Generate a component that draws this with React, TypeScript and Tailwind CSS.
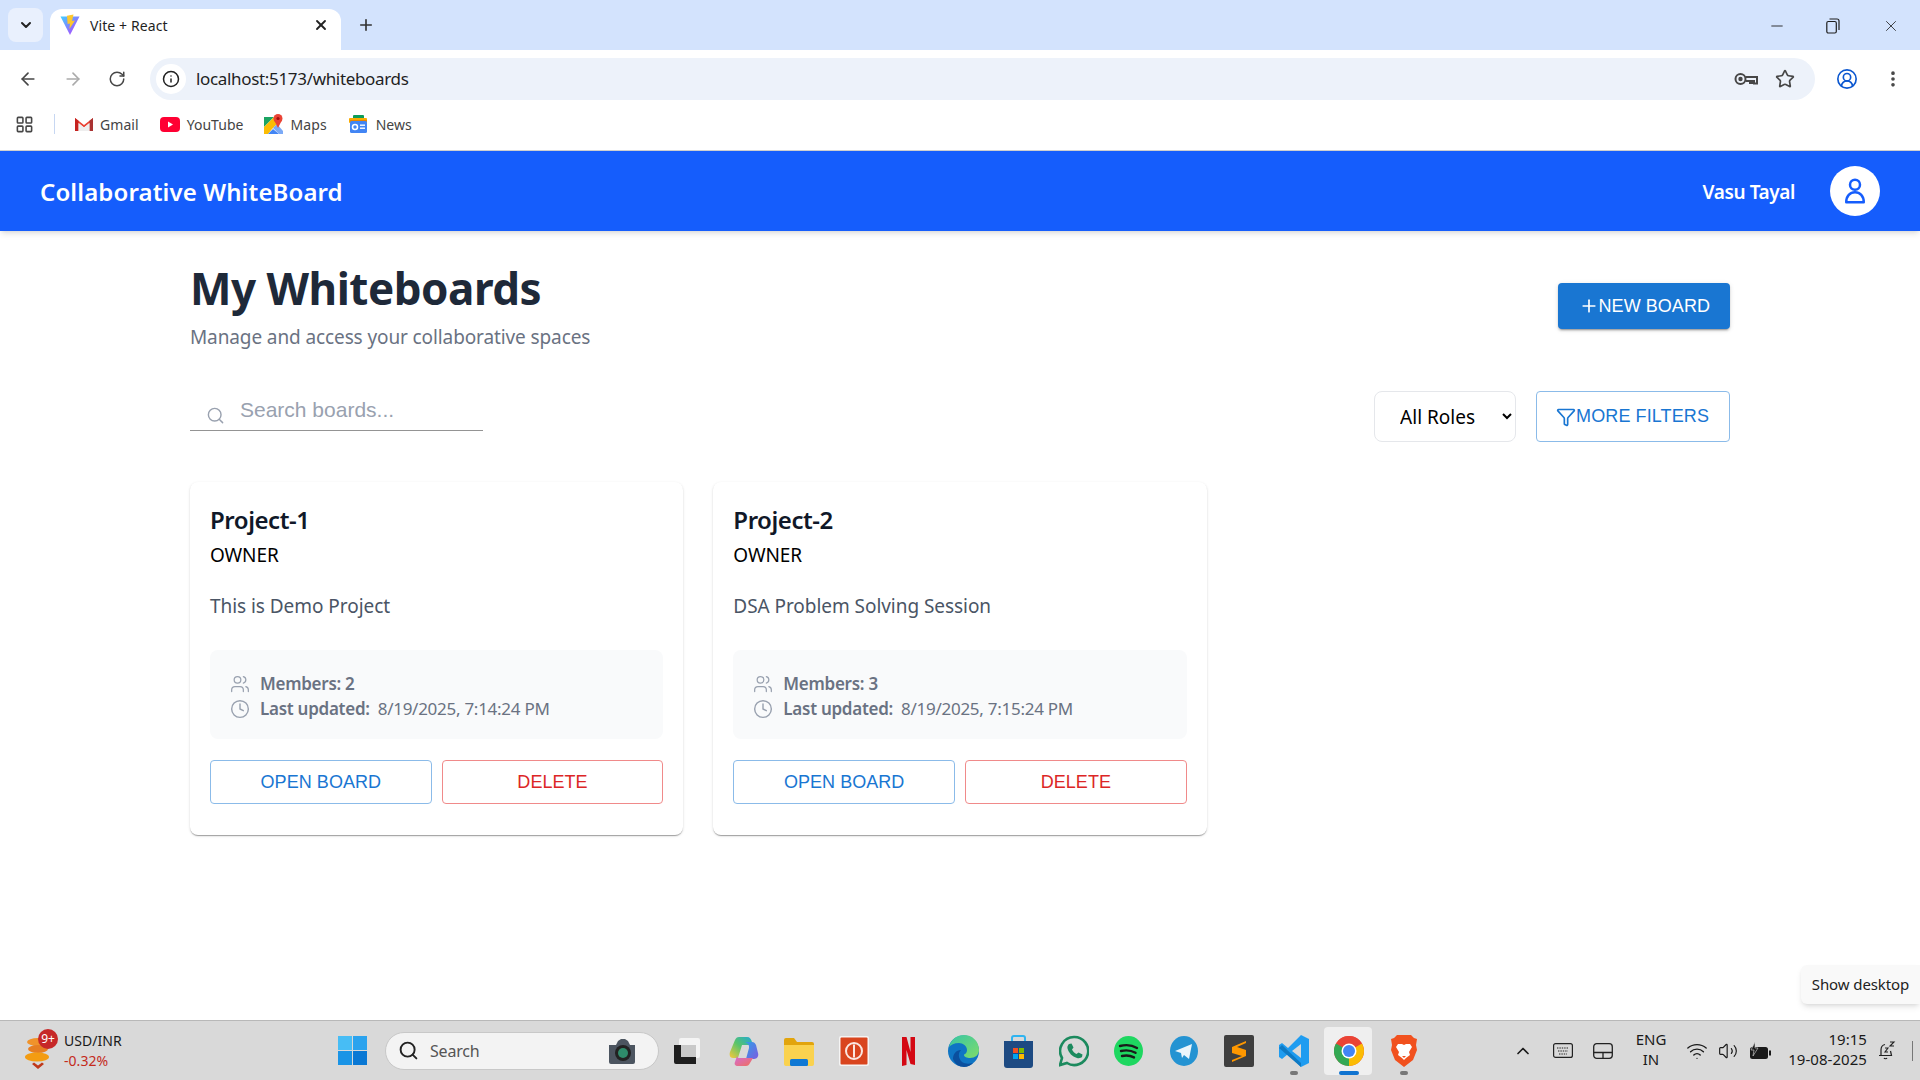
import React from "react";
import { ArrowLeft, ArrowRight, RotateCw, Info, Star, EllipsisVertical, Minus, X, Plus, ChevronDown, ChevronUp, Users, Clock, Search, Funnel, LayoutGrid, Wifi, Volume2, CircleUserRound } from "lucide-react";

const sans = "font-['Noto_Sans','Open_Sans',sans-serif]";

function Vite() {
  return (
    <svg width="20" height="22" viewBox="0 0 20 22">
      <defs>
        <linearGradient id="v1" x1="0" y1="0" x2="1" y2="1"><stop offset="0" stopColor="#41d1ff" /><stop offset="1" stopColor="#bd34fe" /></linearGradient>
      </defs>
      <path d="M0.5 2.5 L19.5 2.5 L10 21 Z" fill="url(#v1)" />
      <path d="M13.5 0.5 L7 1.8 L7.6 10 L10 9.4 L9.4 15 L15 6.5 L12 7 Z" fill="#fdc72e" />
    </svg>
  );
}
function Gmail() {
  return (
    <svg width="20" height="16" viewBox="0 0 20 16">
      <path d="M1 15V2l9 7 9-7v13h-3.5V7L10 11.5 4.5 7v8z" fill="#ea4335" />
      <path d="M1 15V2l3.5 2.8V15z" fill="#c5221f" />
      <path d="M15.5 15V4.8L19 2v13z" fill="#a33" />
      <path d="M4.5 7 10 11.5 15.5 7v8h-11z" fill="#eee" />
    </svg>
  );
}
function YouTube() {
  return (
    <svg width="20" height="15" viewBox="0 0 20 15">
      <rect width="20" height="15" rx="4" fill="#ff0033" />
      <path d="M8 4.5v6l5-3z" fill="#fff" />
    </svg>
  );
}
function Maps() {
  return (
    <svg width="19" height="20" viewBox="0 0 19 20">
      <path d="M0 3h10L0 13z" fill="#1ba462" />
      <path d="M0 13 10 3l4 6-6 6-4 5H0z" fill="#fbbc04" />
      <path d="M4 20l5-5 6 5z" fill="#4285f4" />
      <path d="M9 14l4-4 6 7v3h-4z" fill="#7baaf7" />
      <circle cx="14" cy="4.5" r="4.5" fill="#ea4335" />
      <path d="M10 6l4 8 4-8z" fill="#ea4335" />
      <circle cx="14" cy="4.5" r="1.6" fill="#a50e0e" />
    </svg>
  );
}
function News() {
  return (
    <svg width="19" height="18" viewBox="0 0 19 18">
      <rect x="4" y="0" width="11" height="6" rx="1" fill="#0c9d58" />
      <rect x="0" y="3" width="18" height="5" rx="1" fill="#f9ab00" />
      <path d="M1 5h17l-1 5H2z" fill="#e37400" opacity=".7" />
      <rect x="1" y="6" width="17" height="12" rx="1.5" fill="#4285f4" />
      <rect x="3.5" y="9.5" width="5" height="5" rx="2.5" fill="none" stroke="#fff" strokeWidth="1.5" />
      <rect x="11" y="9.5" width="5" height="1.4" fill="#fff" />
      <rect x="11" y="12.5" width="5" height="1.4" fill="#fff" />
    </svg>
  );
}
function Key() {
  return (
    <svg width="24" height="14" viewBox="0 0 24 14" fill="none" stroke="#474747" strokeWidth="2">
      <circle cx="6.5" cy="7" r="5" />
      <circle cx="6.5" cy="7" r="1.2" fill="#474747" />
      <path d="M11.5 5H23v6.5h-3V9h-2v2h-2V9h-4.5" />
    </svg>
  );
}
function Restore() {
  return (
    <svg width="14" height="16" viewBox="0 0 14 16" fill="none" stroke="#1f1f1f" strokeWidth="1.2">
      <rect x="0.8" y="3.5" width="9.5" height="11.5" rx="1.5" />
      <path d="M3.5 1h7.5a2 2 0 0 1 2 2v9" />
    </svg>
  );
}

function Card({ title, desc, members, updated }: { title: string; desc: string; members: number; updated: string }) {
  return (
    <div className="h-[353px] rounded-lg bg-white p-5 shadow-[0_2px_1px_-1px_rgba(0,0,0,0.2),0_1px_1px_0_rgba(0,0,0,0.14),0_1px_3px_0_rgba(0,0,0,0.12)]">
      <h2 className="mt-[3px] text-[24px] leading-[30px] font-semibold tracking-[-0.45px] text-gray-900">{title}</h2>
      <p className="mt-[6px] text-[19px] leading-[28px] tracking-[-0.1px] text-black">OWNER</p>
      <p className="mt-[23px] text-[19px] leading-[28px] tracking-[-0.05px] text-gray-600">{desc}</p>
      <div className="mt-[30px] h-[89px] rounded-lg bg-gray-50 px-[20px] py-[21px] text-[17px] tracking-[-0.27px] text-gray-500">
        <div className="flex h-[25px] items-center gap-[10px]">
          <Users size={20} strokeWidth={1.5} className="text-gray-400" />
          <span className="font-semibold">Members: {members}</span>
        </div>
        <div className="flex h-[25px] items-center gap-[10px]">
          <Clock size={20} strokeWidth={1.7} className="text-gray-400" />
          <span><span className="font-semibold">Last updated:</span><span className="ml-[8px]">{updated}</span></span>
        </div>
      </div>
      <div className="mt-[21px] flex gap-[10px] font-['Liberation_Sans',sans-serif] text-[18px] tracking-[0.05px]">
        <button className="h-[44px] flex-1 rounded border border-[#8bbbe9] text-[#1976d2]">OPEN BOARD</button>
        <button className="h-[44px] flex-1 rounded border border-[#f08a8a] text-[#dc2626]">DELETE</button>
      </div>
    </div>
  );
}

function Slot({ children, active, dot }: { children: React.ReactNode; active?: boolean; dot?: boolean }) {
  return (
    <div className="relative flex h-[48px] w-[55px] shrink-0 items-center justify-center">
      {active && <div className="absolute inset-y-0 left-[3px] right-[4px] rounded bg-[#efefef]" />}
      <div className="relative flex items-center justify-center">{children}</div>
      {active && <div className="absolute bottom-0 h-[4px] w-[20px] rounded-full bg-[#0f73d0]" />}
      {dot && <div className="absolute bottom-0 h-[4px] w-[8px] rounded-full bg-[#777]" />}
    </div>
  );
}

function Taskbar() {
  return (
    <div className={`flex h-[60px] shrink-0 items-center justify-between border-t border-[#b8b8b8] bg-[#d9d9d9] ${sans}`}>
      <div className="flex items-center">
        <div className="flex w-[325px] items-center pl-[25px]">
          <div className="relative h-[40px] w-[36px]">
            <svg width="26" height="40" viewBox="0 0 26 40" className="absolute left-0 top-0">
              <ellipse cx="13" cy="11" rx="11" ry="4" fill="#f0932b" />
              <ellipse cx="13" cy="18" rx="10" ry="4" fill="#e67e22" />
              <ellipse cx="12" cy="26" rx="12" ry="4.5" fill="#f39c12" />
              <path d="M7 33l6 5 6-5-2-1.5-4 3-4-3z" fill="#c0391b" />
            </svg>
            <div className="absolute left-[13px] top-[-2px] flex h-[20px] w-[20px] items-center justify-center rounded-full bg-[#c62828] text-[12px] leading-none text-white">9+</div>
          </div>
          <div className="ml-[3px] text-[14px] leading-[20px] tracking-[0.05px]">
            <div className="text-[#1a1a1a]">USD/INR</div>
            <div className="text-[#c42b1c]">-0.32%</div>
          </div>
        </div>
        <Slot>
          <svg width="29" height="29" viewBox="0 0 29 29">
            <rect x="0" y="0" width="14" height="14" fill="#47bdf5" />
            <rect x="15" y="0" width="14" height="14" fill="#2ba3ee" />
            <rect x="0" y="15" width="14" height="14" fill="#1a94e6" />
            <rect x="15" y="15" width="14" height="14" fill="#0a78d4" />
          </svg>
        </Slot>
        <div className="ml-[5px] flex h-[38px] w-[274px] items-center rounded-full border border-[#c8c8c8] bg-[#f3f3f3] pl-[12px] pr-[21px]">
          <Search size={21} strokeWidth={2.2} className="text-[#222]" />
          <span className="ml-[11px] flex-1 text-[16px] tracking-[-0.2px] text-[#555]">Search</span>
          <svg width="30" height="28" viewBox="0 0 30 28">
            <path d="M2 8h7l2-4 3-2h4l3 2 2 4h5v17a2 2 0 0 1-2 2H4a2 2 0 0 1-2-2z" fill="#4c5560" />
            <circle cx="16" cy="16" r="8" fill="#222" />
            <circle cx="16" cy="16" r="5" fill="#2e8b6a" />
          </svg>
        </div>
        <Slot>
          <svg width="26" height="26" viewBox="0 0 26 26">
            <rect x="5" y="0" width="21" height="20" rx="2" fill="#f4f4f4" />
            <path d="M0 7h7v12h15v7H2a2 2 0 0 1-2-2z" fill="#1f1f1f" />
            <rect x="7" y="7" width="15" height="12" fill="#c9c9c9" />
          </svg>
        </Slot>
        <div className="w-[2px]" />
        <Slot>
          <svg width="30" height="30" viewBox="0 0 30 30">
            <defs>
              <linearGradient id="c1" x1="0" y1="0" x2="1" y2="1"><stop offset="0" stopColor="#2f9fe8" /><stop offset="1" stopColor="#7c5ce0" /></linearGradient>
              <linearGradient id="c2" x1="0" y1="1" x2="1" y2="0"><stop offset="0" stopColor="#f7c93c" /><stop offset=".5" stopColor="#58c46a" /><stop offset="1" stopColor="#1fa8d8" /></linearGradient>
              <linearGradient id="c3" x1="0" y1="0" x2="1" y2="1"><stop offset="0" stopColor="#d36bd8" /><stop offset="1" stopColor="#f0705a" /></linearGradient>
            </defs>
            <path d="M10 1h8c3 0 4 2 5 5l1 3H13L9 22H4C1 22 0 19 1 16l5-12c1-2 2-3 4-3z" fill="url(#c2)" />
            <path d="M16 6h7c2 0 3 1 4 3l2 8c1 3-1 6-4 6h-8l3-11c.5-3-1-5-4-6z" fill="url(#c1)" />
            <path d="M9 22h15l-3 5c-1 2-2 3-4 3H9c-3 0-4-2-3-4l2-6z" fill="url(#c3)" />
          </svg>
        </Slot>
        <Slot>
          <svg width="30" height="30" viewBox="0 0 30 30">
            <path d="M0 4a2 2 0 0 1 2-2h8l3 4h15a2 2 0 0 1 2 2v4H0z" fill="#e2a40c" />
            <path d="M0 9h30v19a2 2 0 0 1-2 2H2a2 2 0 0 1-2-2z" fill="#fad24f" />
            <rect x="6" y="23" width="18" height="7" rx="1.5" fill="#0f78d4" />
          </svg>
        </Slot>
        <Slot>
          <svg width="30" height="30" viewBox="0 0 30 30">
            <rect width="30" height="30" rx="2" fill="#f4f4f4" />
            <rect x="1.5" y="1.5" width="27" height="27" rx="1" fill="#d9451e" />
            <circle cx="15" cy="15" r="8" fill="none" stroke="#fbe7e0" strokeWidth="2" />
            <rect x="14" y="8.5" width="2" height="13" fill="#fbe7e0" />
          </svg>
        </Slot>
        <Slot>
          <svg width="13" height="30" viewBox="0 0 13 30">
            <path d="M0 1h4.5l4 15V1H13v28l-4.5-1-4-14v15L0 30z" fill="#d40813" />
          </svg>
        </Slot>
        <Slot>
          <svg width="31" height="32" viewBox="0 0 31 32">
            <defs>
              <linearGradient id="e1" x1="0" y1="0" x2="1" y2="1"><stop offset="0" stopColor="#36c5a5" /><stop offset="1" stopColor="#7fdc6a" /></linearGradient>
            </defs>
            <circle cx="15.5" cy="16" r="15.5" fill="#0f75c4" />
            <path d="M1 12C3 4 9 0 16 0c8 0 15 6 15 15 0 5-4 8-9 8-3 0-6-1-6-3 0-1 3-1 3-5 0-4-4-7-8-7-5 0-8 2-10 4z" fill="url(#e1)" />
            <path d="M13 15c-3 3-3 8 1 12 3 2 7 2 11 1-2 2-5 4-9 4-5 0-9-3-11-8 0-5 3-9 8-9z" fill="#0a4f9e" />
          </svg>
        </Slot>
        <Slot>
          <svg width="29" height="34" viewBox="0 0 29 34">
            <path d="M8 8V4a2 2 0 0 1 2-2h9a2 2 0 0 1 2 2v4" fill="none" stroke="#2fb4f0" strokeWidth="2" />
            <path d="M0 7h29v24a3 3 0 0 1-3 3H3a3 3 0 0 1-3-3z" fill="#1d4a82" />
            <rect x="9" y="14" width="5" height="5" fill="#f25022" />
            <rect x="15" y="14" width="5" height="5" fill="#7fba00" />
            <rect x="9" y="20" width="5" height="5" fill="#00a4ef" />
            <rect x="15" y="20" width="5" height="5" fill="#ffb900" />
          </svg>
        </Slot>
        <Slot>
          <svg width="30" height="32" viewBox="0 0 30 32">
            <path d="M15 2a14 14 0 0 0-12 21L1 30l7-2A14 14 0 1 0 15 2z" fill="none" stroke="#1c8a5e" strokeWidth="2.6" />
            <path d="M10 9l2.5-.5 2 4-1.5 2c1 2 2.5 3.5 4.5 4.5l2-1.5 4 2-.5 2.5c-1 1-3 1.500-5 1-5-1.500-8-5-9.500-9.500-.5-2 .5-3.500 1.500-4.500z" fill="#1c8a5e" />
          </svg>
        </Slot>
        <Slot>
          <svg width="29" height="30" viewBox="0 0 29 30">
            <ellipse cx="14.5" cy="15" rx="14.5" ry="15" fill="#1ed760" />
            <path d="M6 10c6-1.5 12-1 17 2M7 15c5-1.2 10-.8 14.5 1.8M8 20c4-1 8-.7 12 1.4" fill="none" stroke="#1a1a1a" strokeWidth="2.4" strokeLinecap="round" />
          </svg>
        </Slot>
        <Slot>
          <svg width="28" height="30" viewBox="0 0 28 30">
            <ellipse cx="14" cy="15" rx="14" ry="15" fill="#2493d2" />
            <path d="M5 15l17-7-3 15-5-4-2 3-1-5z" fill="#eaf5fb" />
          </svg>
        </Slot>
        <Slot>
          <svg width="30" height="32" viewBox="0 0 30 32">
            <rect width="30" height="32" rx="2" fill="#3f3f3f" />
            <path d="M22 6 8 12v6l10 3-10 4v2l14-6v-6l-9-3 9-4z" fill="#ff9800" />
          </svg>
        </Slot>
        <Slot dot>
          <svg width="30" height="32" viewBox="0 0 30 32">
            <path d="M22 0l8 4v24l-8 4-13-13-6 5-3-2v-12l3-2 6 5z" fill="#1f9cf0" />
            <path d="M22 9v14l-9-7z" fill="#d9d9d9" />
            <path d="M3 10l19 18v4L0 13z" fill="#0f7ac4" />
          </svg>
        </Slot>
        <Slot active>
          <svg width="30" height="30" viewBox="0 0 30 30">
            <circle cx="15" cy="15" r="15" fill="#ea4335" />
            <path d="M15 15 27.99 7.5A15 15 0 0 1 15 30z" fill="#fbbc04" />
            <path d="M15 15 15 30A15 15 0 0 1 2 7.5z" fill="#34a853" />
            <path d="M2 7.5A15 15 0 0 1 15 0 15 15 0 0 1 27.99 7.5H15z" fill="#ea4335" />
            <circle cx="15" cy="15" r="7.5" fill="#fff" />
            <circle cx="15" cy="15" r="6" fill="#4285f4" />
          </svg>
        </Slot>
        <Slot dot>
          <svg width="26" height="32" viewBox="0 0 26 32">
            <path d="M6 0h14l3 3 3 1-1 6 1 5-4 10-9 7-9-7-4-10 1-5-1-6 3-1z" fill="#f1511e" />
            <path d="M7 9h4l2 1 2-1h4l2 3-3 5 1 3-4 3-2 2-2-2-4-3 1-3-3-5z" fill="#fff" />
            <path d="M11 21h4l-2 2z" fill="#f1511e" />
          </svg>
        </Slot>
      </div>
      <div className="flex items-center pr-[7px] text-[#1a1a1a]">
        <div className="flex w-[40px] justify-center"><ChevronUp size={20} strokeWidth={2} /></div>
        <div className="flex w-[40px] justify-center">
          <svg width="20" height="15" viewBox="0 0 20 15" fill="none" stroke="#222" strokeWidth="1.2">
            <rect x=".6" y=".6" width="18.8" height="13.8" rx="2" />
            <path d="M4 5h12M5 8h10M6 11h8" strokeDasharray="1.4 1" />
          </svg>
        </div>
        <div className="flex w-[39px] justify-center">
          <svg width="20" height="16" viewBox="0 0 20 16" fill="none" stroke="#222" strokeWidth="1.3">
            <rect x=".7" y=".7" width="18.6" height="14.600" rx="3" />
            <path d="M.7 9.500h18.600M10 9.500v5.800" />
          </svg>
        </div>
        <div className="w-[58px] pb-[3px] text-center text-[15px] leading-[20px]">ENG<br />IN</div>
        <div className="flex w-[34px] justify-center"><Wifi size={22} strokeWidth={1.5} /></div>
        <div className="flex w-[28px] justify-center"><Volume2 size={20} strokeWidth={1.4} /></div>
        <div className="flex w-[35px] justify-center">
          <svg width="22" height="18" viewBox="0 0 22 18">
            <rect x="1" y="5" width="18" height="12" rx="2.5" fill="#1a1a1a" />
            <rect x="20" y="8.500" width="2" height="5" fill="#1a1a1a" />
            <path d="M6 0 2 8h3l-1 6 5-8H6z" fill="#1a1a1a" stroke="#d9d9d9" strokeWidth=".6" />
          </svg>
        </div>
        <div className="w-[90px] pb-[3px] text-right text-[15px] leading-[20px] tracking-[0.05px]">19:15<br />19-08-2025</div>
        <div className="flex w-[40px] justify-center">
          <svg width="18" height="20" viewBox="0 0 18 20" fill="none" stroke="#222" strokeWidth="1.2">
            <path d="M3 14V9c0-3 1.500-5 4-5.500M1 14.500h12.500L12.500 10M6 17c.5 1 2.500 1 3 0" />
            <path d="M7 7h3l-3 4h3M12 1h4l-4 4h4" strokeWidth="1.1" />
          </svg>
        </div>
        <div className="ml-[5px] h-[20px] w-px bg-[#777]" />
      </div>
    </div>
  );
}

export default function App() {
  return (
    <div className={`relative flex h-screen w-full flex-col overflow-hidden bg-white ${sans}`}>
      {/* Tab strip */}
      <div className="flex h-[50px] shrink-0 items-end bg-[#d3e3fd]">
        <div className="mb-[8px] ml-[8px] flex h-[34px] w-[35px] items-center justify-center rounded-lg bg-[#e9f0fd]">
          <ChevronDown size={16} strokeWidth={3} className="text-[#222]" />
        </div>
        <div className="ml-[7px] flex h-[41px] w-[291px] items-center rounded-t-xl bg-white pb-[9px] pl-[9px] pr-[12px]">
          <div className="ml-[1px]"><Vite /></div>
          <span className="ml-[10px] flex-1 text-[14px] tracking-[0.1px] text-[#1f1f1f]">Vite + React</span>
          <X size={16} strokeWidth={2.8} className="text-[#222]" />
        </div>
        <div className="mb-[8px] ml-[15px] flex h-[34px] w-[20px] items-center justify-center">
          <Plus size={18} strokeWidth={2.2} className="text-[#333]" />
        </div>
        <div className="flex-1" />
        <div className="mb-[15px] flex items-center gap-[40px] pr-[20px]">
          <Minus size={18} strokeWidth={1.2} className="text-[#1f1f1f]" />
          <div className="flex items-center gap-[42px]">
            <Restore />
            <X size={18} strokeWidth={1.1} className="text-[#1f1f1f]" />
          </div>
        </div>
      </div>
      {/* Toolbar */}
      <div className="flex h-[58px] shrink-0 items-start rounded-t-lg bg-white pt-[8px]">
        <div className="flex h-[42px] items-center gap-[25px] pl-[18px]">
          <ArrowLeft size={20} strokeWidth={2} className="text-[#474747]" />
          <ArrowRight size={20} strokeWidth={2} className="text-[#ababab]" />
          <RotateCw size={18} strokeWidth={2} className="text-[#474747]" />
        </div>
        <div className="ml-[24px] flex h-[42px] flex-1 items-center rounded-full bg-[#edf2fa]">
          <div className="ml-[6px] flex h-[30px] w-[30px] items-center justify-center rounded-full bg-white">
            <Info size={18} strokeWidth={2} className="text-[#222]" />
          </div>
          <span className="ml-[10px] flex-1 text-[17px] tracking-[-0.33px] text-[#1f1f1f]">localhost:5173/whiteboards</span>
          <div className="mr-[20px] flex items-center gap-[17px]">
            <Key />
            <Star size={20} strokeWidth={2} className="text-[#474747]" />
          </div>
        </div>
        <div className="flex h-[42px] items-center gap-[25px] pl-[21px] pr-[17px]">
          <CircleUserRound size={22} strokeWidth={1.8} className="text-[#0b57d0]" />
          <EllipsisVertical size={20} strokeWidth={2.4} className="text-[#474747]" />
        </div>
      </div>
      {/* Bookmarks */}
      <div className="flex h-[43px] shrink-0 items-center border-b border-[#d0d0d0] bg-white pb-[10px] text-[14px] tracking-[0.05px] text-[#444]">
        <LayoutGrid size={19} strokeWidth={2} className="ml-[15px] text-[#474747]" />
        <div className="ml-[20px] h-[20px] w-[1px] bg-[#c7d7f2]" />
        <div className="ml-[19px] flex items-center gap-[6px]"><Gmail /><span>Gmail</span></div>
        <div className="ml-[21px] flex items-center gap-[7px]"><YouTube /><span>YouTube</span></div>
        <div className="ml-[20px] flex items-center gap-[8px]"><Maps /><span>Maps</span></div>
        <div className="ml-[22px] flex items-center gap-[8px]"><News /><span>News</span></div>
      </div>
      {/* App header */}
      <header className="flex h-[80px] shrink-0 items-center justify-between bg-blue-600 pl-10 pr-10 text-white shadow-md">
        <div className="pt-[2px] text-[24px] font-semibold tracking-[0.12px]">Collaborative WhiteBoard</div>
        <div className="flex items-center gap-[35px]">
          <span className="pt-[2px] text-[19px] font-semibold tracking-[-0.4px]">Vasu Tayal</span>
          <div className="flex h-[50px] w-[50px] items-center justify-center rounded-full bg-white">
            <svg width="30" height="30" viewBox="0 0 24 24" fill="none" stroke="#155dfc" strokeWidth="2" strokeLinejoin="round">
              <circle cx="12" cy="7" r="4" />
              <path d="M5 21c0-5 3-8 7-8s7 3 7 8z" />
            </svg>
          </div>
        </div>
      </header>
      {/* Main */}
      <main className="flex-1 px-[190px] pt-[28px]">
        <div className="flex items-start justify-between">
          <div>
            <h1 className="pt-[1px] text-[44px] leading-[56px] font-bold tracking-[-0.5px] text-gray-800">My Whiteboards</h1>
            <p className="mt-[7px] text-[19px] leading-[28px] tracking-[-0.11px] text-gray-500">Manage and access your collaborative spaces</p>
          </div>
          <button className="mt-[24px] flex h-[46px] items-center rounded bg-[#1976d2] pl-[21px] pr-5 font-['Liberation_Sans',sans-serif] text-[18px] tracking-[0.05px] text-white shadow-[0_3px_1px_-2px_rgba(0,0,0,0.2),0_2px_2px_0_rgba(0,0,0,0.14),0_1px_5px_0_rgba(0,0,0,0.12)]">
            <Plus size={20} strokeWidth={2} />NEW BOARD
          </button>
        </div>
        <div className="mt-[40px] flex items-start justify-between">
          <div className="relative mt-[1px] h-[39px] w-[293px] border-b border-[#949494]">
            <Search size={19} strokeWidth={1.8} className="absolute left-[16px] top-[14px] text-gray-400" />
            <input placeholder="Search boards..." className="h-[36px] w-full pl-[50px] font-['Liberation_Sans',sans-serif] text-[21px] outline-none placeholder:text-gray-400" />
          </div>
          <div className="flex items-center gap-5">
            <select className="h-[51px] w-[142px] rounded-lg border border-gray-200 bg-white pb-[-1px] pl-[21px] pt-[1px] text-[19px] text-black outline-none">
              <option>All Roles</option>
            </select>
            <button className="flex h-[51px] items-center rounded border border-[#8bbbe9] pl-[19px] pr-5 font-['Liberation_Sans',sans-serif] text-[18px] tracking-[0.1px] text-[#1976d2]">
              <Funnel size={20} strokeWidth={2} />MORE FILTERS
            </button>
          </div>
        </div>
        <div className="mt-[40px] grid grid-cols-3 gap-[30px]">
          <Card title="Project-1" desc="This is Demo Project" members={2} updated="8/19/2025, 7:14:24 PM" />
          <Card title="Project-2" desc="DSA Problem Solving Session" members={3} updated="8/19/2025, 7:15:24 PM" />
        </div>
      </main>
      <div className="absolute bottom-[76px] right-0 flex h-[39px] w-[119px] items-center justify-center rounded-l-md bg-[#f9f9f9] text-[15px] tracking-[-0.1px] text-[#222] shadow-md">
        Show desktop
      </div>
      <Taskbar />
    </div>
  );
}
